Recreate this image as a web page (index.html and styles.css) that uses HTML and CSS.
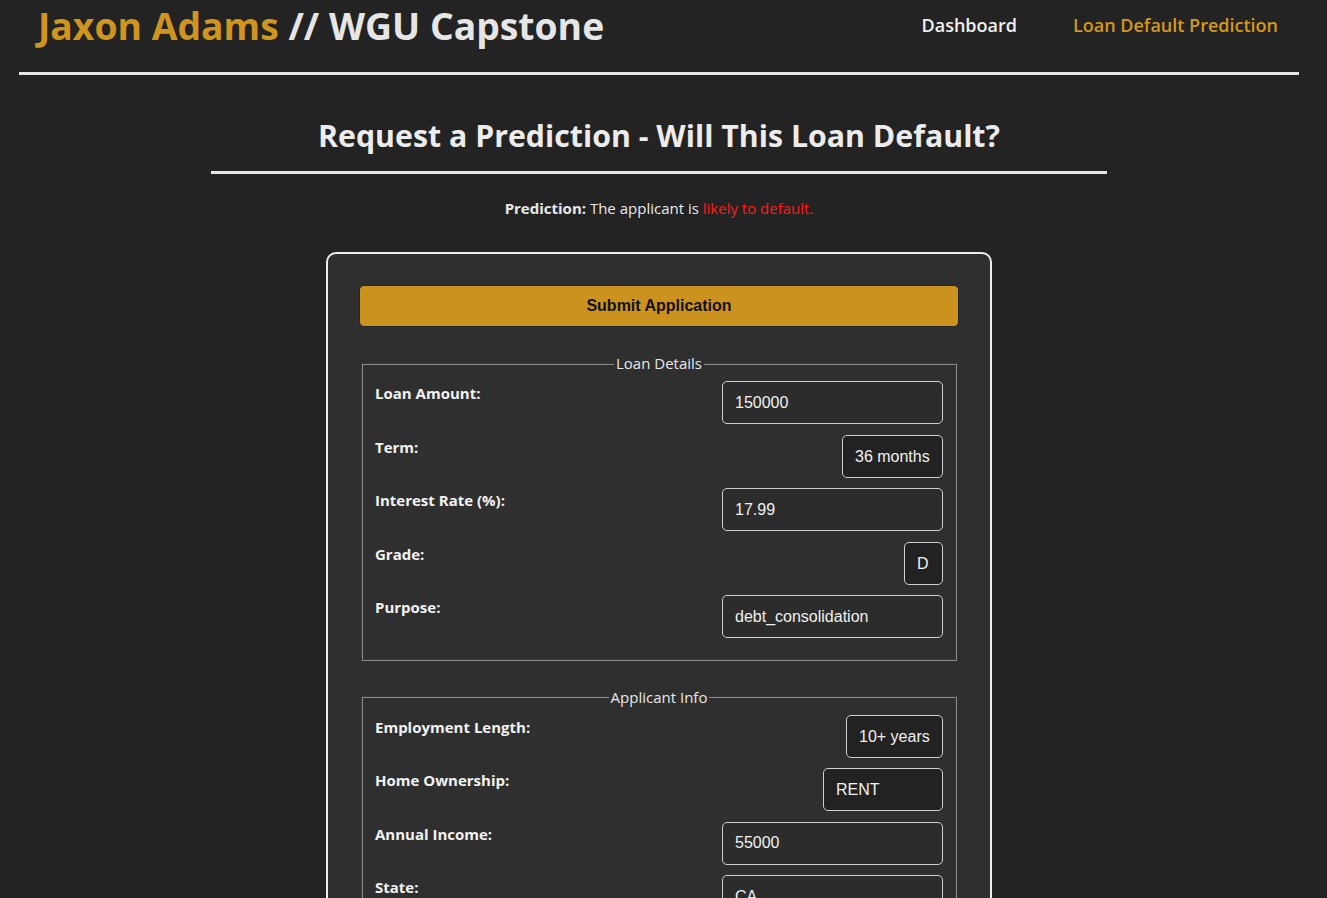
FILE: index.html
```html
<!DOCTYPE html>
<html lang="en">
<head>
<meta charset="utf-8">
<title>Loan Default Prediction</title>
<link rel="stylesheet" href="styles.css">
</head>
<body>
<header class="site-header">
  <div class="brand"><span class="brand-name">Jaxon Adams</span> // WGU Capstone</div>
  <nav class="nav">
    <a class="nav-link" href="#">Dashboard</a>
    <a class="nav-link active" href="#">Loan Default Prediction</a>
  </nav>
</header>
<main class="main">
  <h2 class="page-title">Request a Prediction - Will This Loan Default?</h2>
  <hr class="title-rule">
  <p class="prediction"><strong>Prediction:</strong> The applicant is <span class="bad">likely to default.</span></p>
  <form class="card">
    <button type="button" class="submit">Submit Application</button>
    <fieldset class="group">
      <legend>Loan Details</legend>
      <div class="row"><label>Loan Amount:</label><input class="field" type="text" value="150000"></div>
      <div class="row"><label>Term:</label><select class="pick"><option>36 months</option><option>60 months</option></select></div>
      <div class="row"><label>Interest Rate (%):</label><input class="field" type="text" value="17.99"></div>
      <div class="row"><label>Grade:</label><select class="pick"><option>A</option><option>B</option><option>C</option><option selected>D</option><option>E</option><option>F</option><option>G</option></select></div>
      <div class="row"><label>Purpose:</label><input class="field" type="text" value="debt_consolidation"></div>
    </fieldset>
    <fieldset class="group">
      <legend>Applicant Info</legend>
      <div class="row"><label>Employment Length:</label><select class="pick"><option>&lt; 1 year</option><option>1 year</option><option>5 years</option><option selected>10+ years</option></select></div>
      <div class="row"><label>Home Ownership:</label><select class="pick"><option selected>RENT</option><option>OWN</option><option>MORTGAGE</option></select></div>
      <div class="row"><label>Annual Income:</label><input class="field" type="text" value="55000"></div>
      <div class="row"><label>State:</label><input class="field" type="text" value="CA"></div>
      <div class="row"><label>Debt-to-Income:</label><input class="field" type="text" value="25.5"></div>
    </fieldset>
  </form>
</main>
</body>
</html>
```
FILE: styles.css
```css
html, body {
  margin: 0;
  background: #232323;
  color: #e8e8e8;
  font-family: "Open Sans", "Noto Sans", sans-serif;
}

.site-header {
  display: flex;
  justify-content: space-between;
  align-items: center;
  box-sizing: border-box;
  height: 75px;
  margin: 0 28px 0 19px;
  padding: 0 21px 20px 19px;
  border-bottom: 3px solid #e6e6e6;
}

.brand {
  font-size: 37.3px;
  font-weight: 700;
  color: #e6e6e6;
  line-height: 50px;
}

.brand-name {
  color: #cf951f;
}

.nav {
  display: flex;
  gap: 56px;
  padding-bottom: 3px;
}

.nav-link {
  font-size: 18px;
  font-weight: 600;
  color: #f0f0f0;
  text-decoration: none;
}

.nav-link.active {
  color: #d3981f;
}

.main {
  margin: 0 28px 0 19px;
  text-align: center;
}

.page-title {
  margin: 0;
  padding-top: 41px;
  font-size: 30.3px;
  font-weight: 700;
  line-height: 40px;
  color: #ececec;
}

.title-rule {
  width: 70%;
  margin: 15px auto 0;
  border: 0;
  border-top: 3px solid #e6e6e6;
}

.prediction {
  margin: 24px 0 0;
  font-size: 15px;
  line-height: 20px;
}

.prediction strong { font-weight: 700; }
.bad { color: #ff1a1a; }

.card {
  width: 666px;
  box-sizing: border-box;
  margin: 34px auto 0;
  padding: 31px 31px 40px;
  background: #2f2f2f;
  border: 2px solid #ededed;
  border-radius: 10px;
  text-align: left;
}

.submit {
  display: block;
  width: 100%;
  height: 42px;
  background: #cb931d;
  color: #111;
  border: 1px solid #1e2430;
  border-radius: 5px;
  font-family: "Liberation Sans", Arial, sans-serif;
  font-size: 16px;
  font-weight: 700;
}

.group {
  margin: 26px 2px 0;
  padding: 7px 12px 10px;
  border: 2px groove #8a8a8a;
}

.group legend {
  margin: 0 auto;
  padding: 0 2px;
  font-size: 15px;
  line-height: 21px;
  color: #e8e8e8;
}

.row {
  display: flex;
  justify-content: space-between;
  align-items: flex-start;
  margin-bottom: 10.5px;
}

.row label {
  font-size: 15px;
  font-weight: 700;
  line-height: 20px;
  padding-top: 2px;
  color: #f2f2f2;
}

.field, .pick {
  height: 43px;
  box-sizing: border-box;
  padding: 0 12px;
  border: 1px solid #d0d0d0;
  border-radius: 5px;
  color: #f0f0f0;
  font-family: "Liberation Sans", Arial, sans-serif;
  font-size: 16px;
}

.field {
  width: 221px;
  background: #2c2c2c;
}

.pick {
  appearance: none;
  -webkit-appearance: none;
  background: #222;
}
```
